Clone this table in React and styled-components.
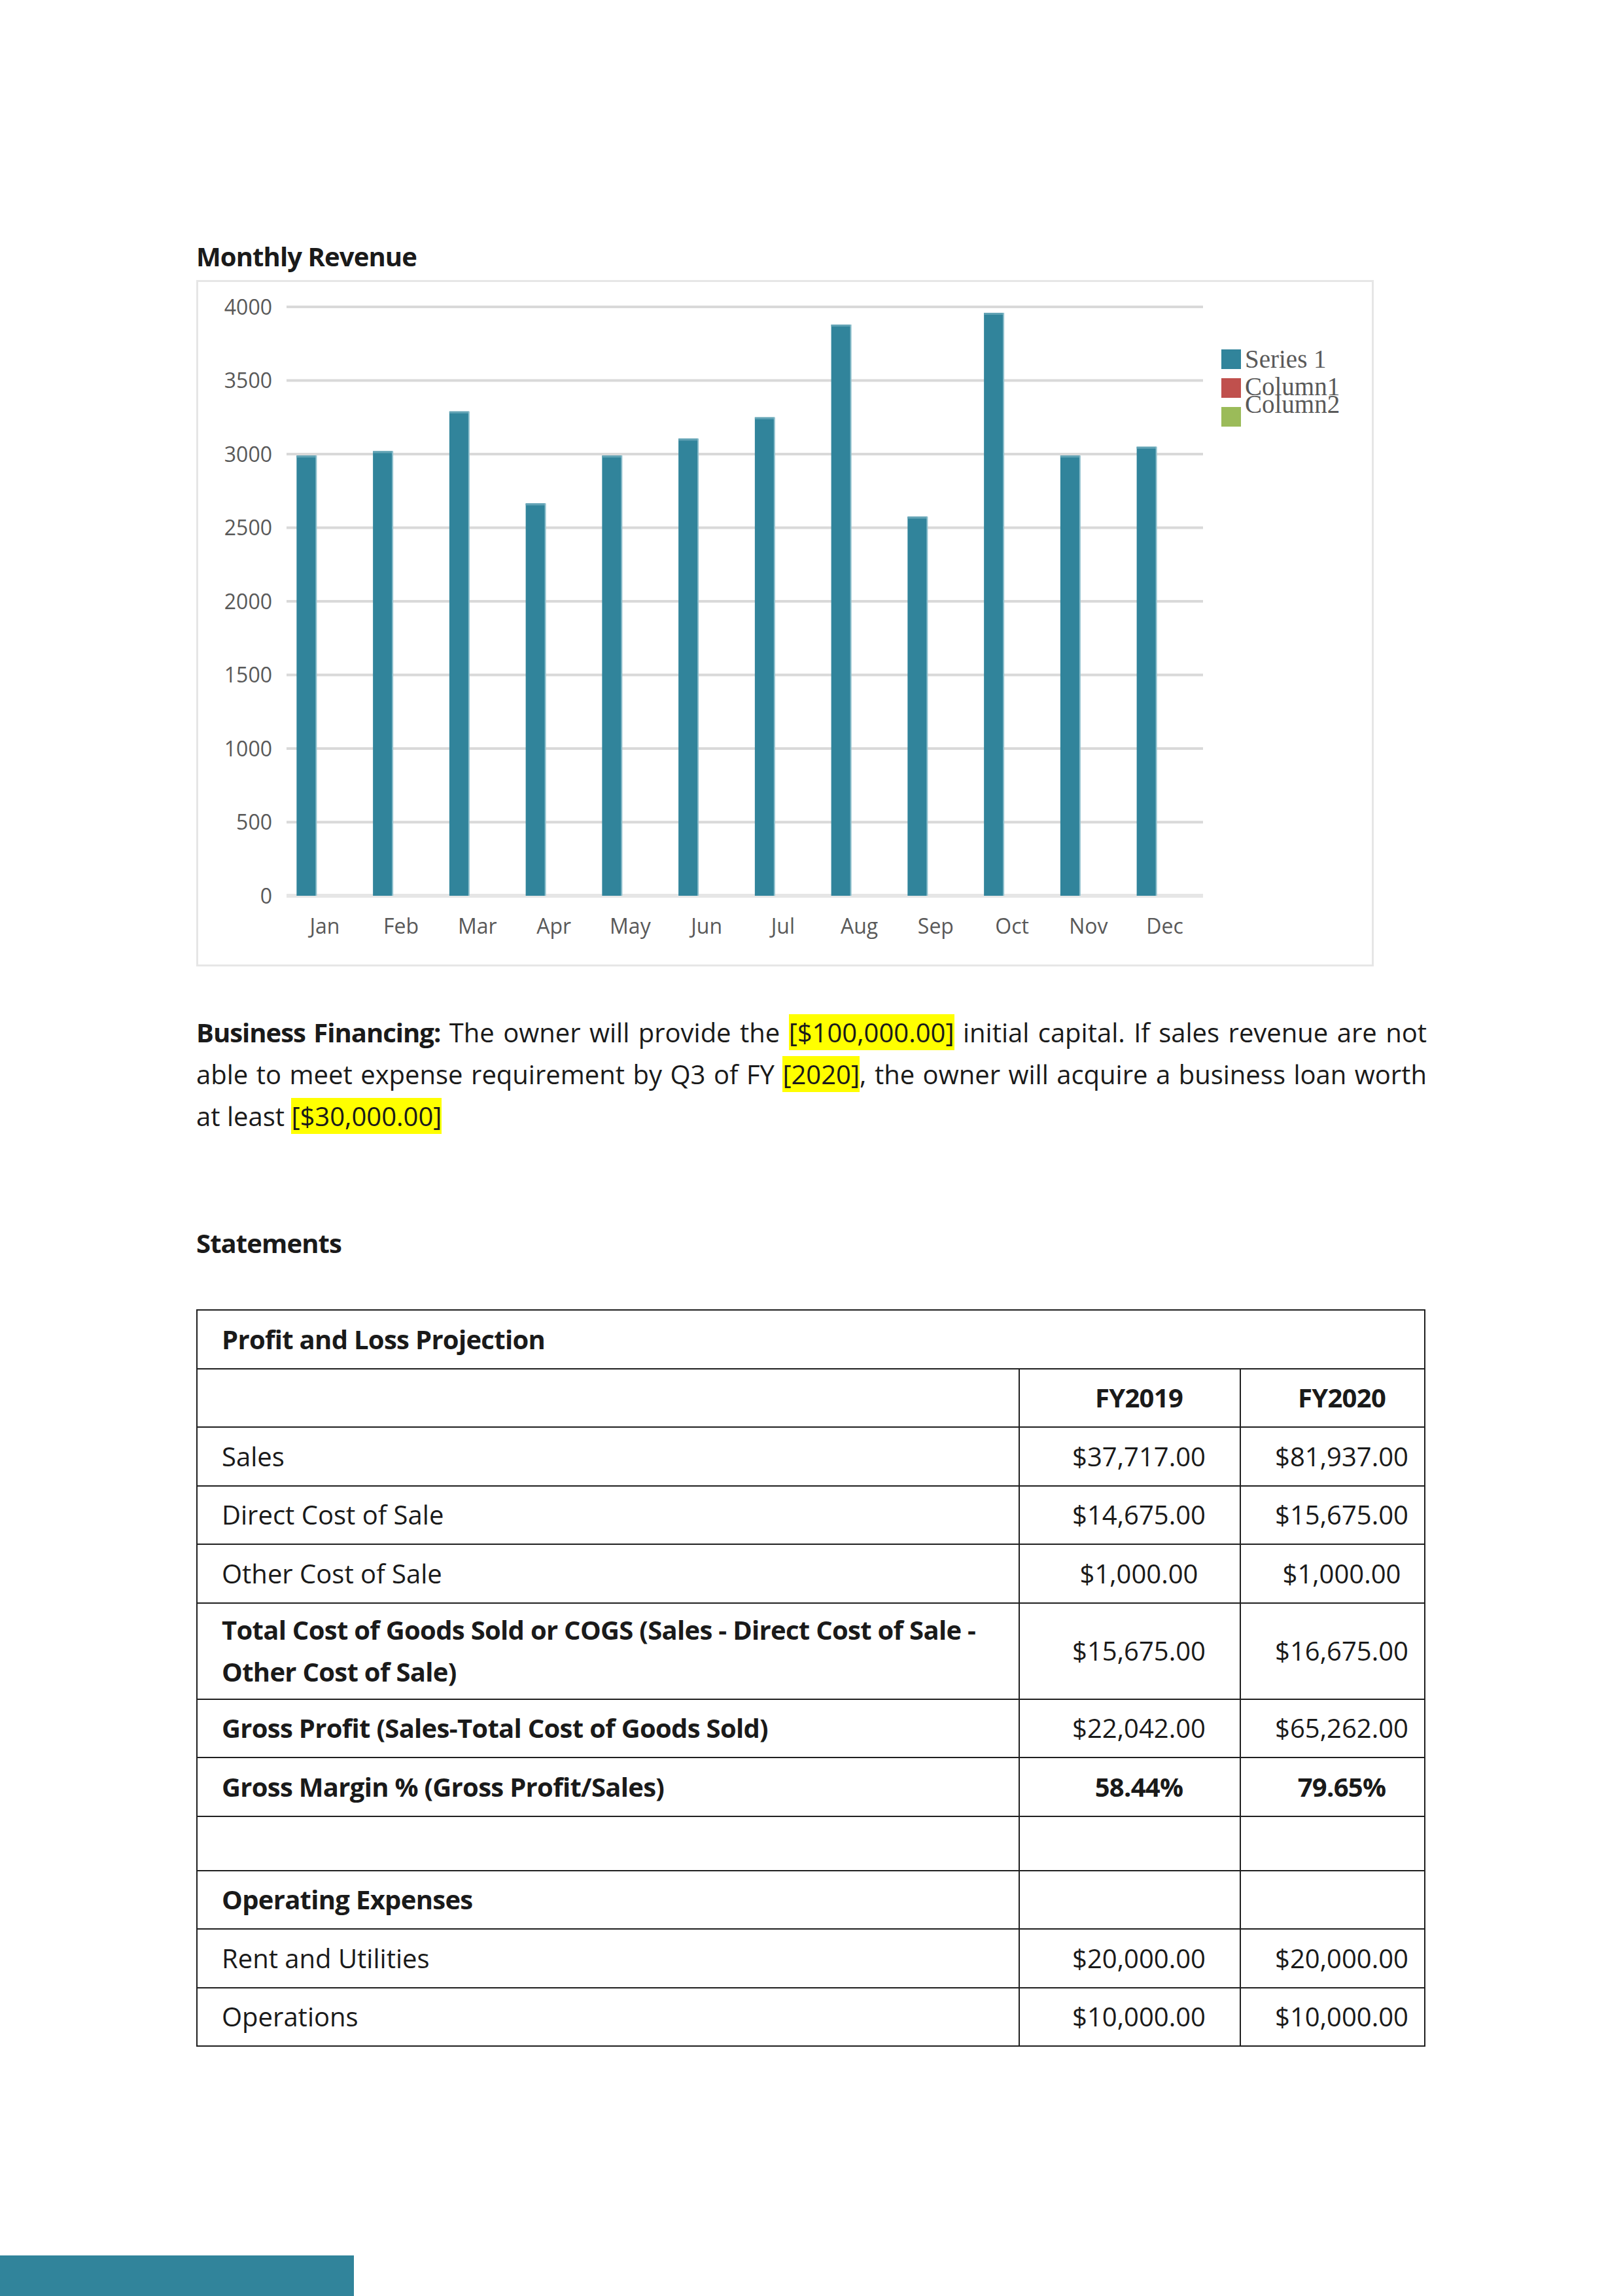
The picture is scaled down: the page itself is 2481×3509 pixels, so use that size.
import React from "react";
import styled, { createGlobalStyle } from "styled-components";

const TEAL = "#31849b";

const months = ["Jan", "Feb", "Mar", "Apr", "May", "Jun", "Jul", "Aug", "Sep", "Oct", "Nov", "Dec"];
const revenue = [2990, 3020, 3290, 2665, 2990, 3105, 3250, 3880, 2575, 3960, 2990, 3050];

const rows = [
  { label: "", a: "FY2019", b: "FY2020", bold: true, boldValues: true, h: 89.5 },
  { label: "Sales", a: "$37,717.00", b: "$81,937.00", h: 89.5 },
  { label: "Direct Cost of Sale", a: "$14,675.00", b: "$15,675.00", h: 89.5 },
  { label: "Other Cost of Sale", a: "$1,000.00", b: "$1,000.00", h: 89.5 },
  {
    label: "Total Cost of Goods Sold or COGS (Sales - Direct Cost of Sale - Other Cost of Sale)",
    a: "$15,675.00",
    b: "$16,675.00",
    bold: true,
    h: 147,
  },
  { label: "Gross Profit (Sales-Total Cost of Goods Sold)", a: "$22,042.00", b: "$65,262.00", bold: true, h: 89.5 },
  { label: "Gross Margin % (Gross Profit/Sales)", a: "58.44%", b: "79.65%", bold: true, boldValues: true, h: 89.5 },
  { label: "", a: "", b: "", h: 83 },
  { label: "Operating Expenses", a: "", b: "", bold: true, h: 89.5 },
  { label: "Rent and Utilities", a: "$20,000.00", b: "$20,000.00", h: 89.5 },
  { label: "Operations", a: "$10,000.00", b: "$10,000.00", h: 89.5 },
];

const GlobalStyle = createGlobalStyle`
  html, body {
    margin: 0;
    padding: 0;
    background: #ffffff;
  }
  body {
    font-family: "Open Sans", "Liberation Sans", sans-serif;
    color: #1a1a1a;
  }
  b {
    font-weight: 700;
    letter-spacing: -1px;
  }
`;

const Page = styled.div`
  width: 2481px;
  min-height: 3509px;
  box-sizing: border-box;
  padding-top: 360px;
  display: flex;
  flex-direction: column;
`;

const Content = styled.main`
  margin-left: 300px;
  width: 1881px;
  font-size: 40px;
  line-height: 64px;
`;

const Heading = styled.h2`
  margin: ${(p) => p.$top || 0}px 0 0;
  font-size: 40px;
  line-height: 64px;
  font-weight: 700;
  letter-spacing: -0.9px;
`;

const ChartBox = styled.div`
  margin-top: 4px;
  width: 1800px;
  height: 1049px;
  box-sizing: border-box;
  border: 3px solid #e6e6e6;
  svg {
    display: block;
  }
`;

const Paragraph = styled.p`
  margin: 69px 0 0;
  text-align: justify;
`;

const Mark = styled.span`
  background: #ffff00;
`;

const Table = styled.table`
  margin-top: 69px;
  width: 1877px;
  table-layout: fixed;
  border-collapse: collapse;
  font-size: 40px;
  line-height: 64px;
`;

const Cell = styled.td`
  box-sizing: border-box;
  height: ${(p) => p.$h}px;
  padding: 0 8px 0 ${(p) => (p.$center ? 36 : 37)}px;
  border: 2px solid #1f1f1f;
  vertical-align: middle;
  text-align: ${(p) => (p.$center ? "center" : "left")};
  font-weight: ${(p) => (p.$bold ? 700 : 400)};
  letter-spacing: ${(p) => (p.$bold ? "-0.7px" : "normal")};
`;

const FooterBar = styled.div`
  margin-top: auto;
  width: 541px;
  height: 62px;
  background: ${TEAL};
`;

const RevenueChart = () => {
  const left = 438;
  const right = 1839;
  const zeroY = 1370;
  const step = 112.5;
  const cat = (right - left) / 12;
  const ticks = [4000, 3500, 3000, 2500, 2000, 1500, 1000, 500, 0];

  return (
    <svg width="1794" height="1043" viewBox="303 432 1794 1043">
      {ticks.map((t, k) => {
        const y = 470 + step * k;
        return (
          <g key={t}>
            <line
              x1={left}
              x2={right}
              y1={y}
              y2={y}
              stroke={t === 0 ? "#e6e6e6" : "#d9d9d9"}
              strokeWidth={t === 0 ? 6 : 4}
            />
            <text
              x={416}
              y={y + 11.5}
              textAnchor="end"
              fontFamily="'Open Sans', sans-serif"
              fontSize="32"
              fill="#595959"
            >
              {t}
            </text>
          </g>
        );
      })}
      {revenue.map((v, i) => {
        const cx = left + cat * (i + 0.5) - 28;
        const top = zeroY - v * 0.225;
        return (
          <g key={months[i]}>
            <rect x={cx - 15} y={top} width={30} height={zeroY - top} fill={TEAL} />
            <rect x={cx - 15} y={top} width={30} height={3} fill="#62a3b5" />
            <rect x={cx + 14} y={top} width={2} height={zeroY - top} fill="#8fc0cd" />
          </g>
        );
      })}
      {months.map((m, i) => (
        <text
          key={m}
          x={left + cat * (i + 0.5)}
          y={1428}
          textAnchor="middle"
          fontFamily="'Open Sans', sans-serif"
          fontSize="32"
          fill="#595959"
        >
          {m}
        </text>
      ))}
      <rect x={1867} y={535} width={30} height={30} fill={TEAL} />
      <rect x={1867} y={579} width={30} height={30} fill="#c0504d" />
      <rect x={1867} y={623} width={30} height={30} fill="#9bbb59" />
      <g fontFamily="'Liberation Serif', serif" fontSize="39" fill="#595959">
        <text x={1903} y={563}>Series 1</text>
        <text x={1903} y={605}>Column1</text>
        <text x={1903} y={632}>Column2</text>
      </g>
    </svg>
  );
};

export default function App() {
  return (
    <>
      <GlobalStyle />
      <Page>
        <Content>
          <Heading>Monthly Revenue</Heading>
          <ChartBox>
            <RevenueChart />
          </ChartBox>
          <Paragraph>
            <b>Business Financing:</b> The owner will provide the <Mark>[$100,000.00]</Mark> initial capital. If
            sales revenue are not able to meet expense requirement by Q3 of FY <Mark>[2020]</Mark>, the owner will
            acquire a business loan worth at least <Mark>[$30,000.00]</Mark>
          </Paragraph>
          <Heading $top={130}>Statements</Heading>
          <Table>
            <colgroup>
              <col style={{ width: 1257 }} />
              <col style={{ width: 338 }} />
              <col style={{ width: 282 }} />
            </colgroup>
            <tbody>
              <tr>
                <Cell colSpan={3} $h={89.5} $bold>
                  Profit and Loss Projection
                </Cell>
              </tr>
              {rows.map((r, i) => (
                <tr key={i}>
                  <Cell $h={r.h} $bold={r.bold}>
                    {r.label}
                  </Cell>
                  <Cell $h={r.h} $center $bold={r.boldValues}>
                    {r.a}
                  </Cell>
                  <Cell $h={r.h} $center $bold={r.boldValues}>
                    {r.b}
                  </Cell>
                </tr>
              ))}
            </tbody>
          </Table>
        </Content>
        <FooterBar />
      </Page>
    </>
  );
}
